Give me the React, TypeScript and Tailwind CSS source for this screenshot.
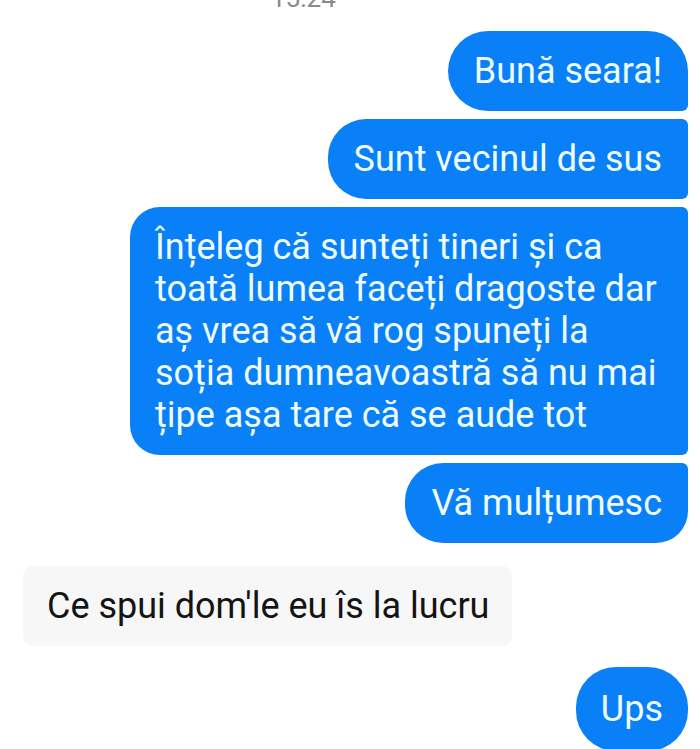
const blue = "bg-[#0a80f8] text-[#eefcff]";

type Msg = { text: React.ReactNode; corners: string; pad?: string };

const outgoing: Msg[] = [
  { text: "Bună seara!", corners: "rounded-[40px] rounded-br-[6px]" },
  { text: "Sunt vecinul de sus", corners: "rounded-l-[38px] rounded-r-[6px]" },
  {
    text: (
      <>
        Înțeleg că sunteți tineri și ca
        <br />
        toată lumea faceți dragoste dar
        <br />
        aș vrea să vă rog spuneți la
        <br />
        soția dumneavoastră să nu mai
        <br />
        țipe așa tare că se aude tot
      </>
    ),
    corners: "rounded-l-[30px] rounded-r-[6px] w-[558px]",
    pad: "pl-[25px] pr-6",
  },
  { text: "Vă mulțumesc", corners: "rounded-l-[38px] rounded-tr-[6px] rounded-br-[32px]" },
];

function Bubble({ text, corners, pad }: Msg) {
  return (
    <div
      className={`${blue} ${corners} ${pad ?? "px-[26px]"} py-[19px] whitespace-nowrap`}
    >
      {text}
    </div>
  );
}

export default function App() {
  return (
    <div
      className="w-[700px] h-[749px] overflow-hidden bg-white text-[36px] leading-[42px]"
      style={{ fontFamily: "Roboto, 'Noto Sans', sans-serif" }}
    >
      {/* timestamp, cut by the top edge as in the screenshot */}
      <div className="-mt-[15px] pl-[271px] h-[26px] text-[26px] leading-[26px] text-[#8a8a8a]">
        15:24
      </div>

      <div className="mt-[20px] pr-3 flex flex-col items-end gap-2">
        {outgoing.map((m, i) => (
          <Bubble key={i} {...m} />
        ))}
      </div>

      <div className="mt-[23px] pl-[23px] flex">
        <div className="bg-[#f7f7f7] text-[#141414] rounded-[10px] pl-[24px] pr-[23px] py-[19px] whitespace-nowrap">
          Ce spui dom'le eu îs la lucru
        </div>
      </div>

      <div className="mt-[21px] pr-3 flex justify-end">
        <div className={`${blue} rounded-[40px] px-[25px] py-[21px]`}>Ups</div>
      </div>
    </div>
  );
}
